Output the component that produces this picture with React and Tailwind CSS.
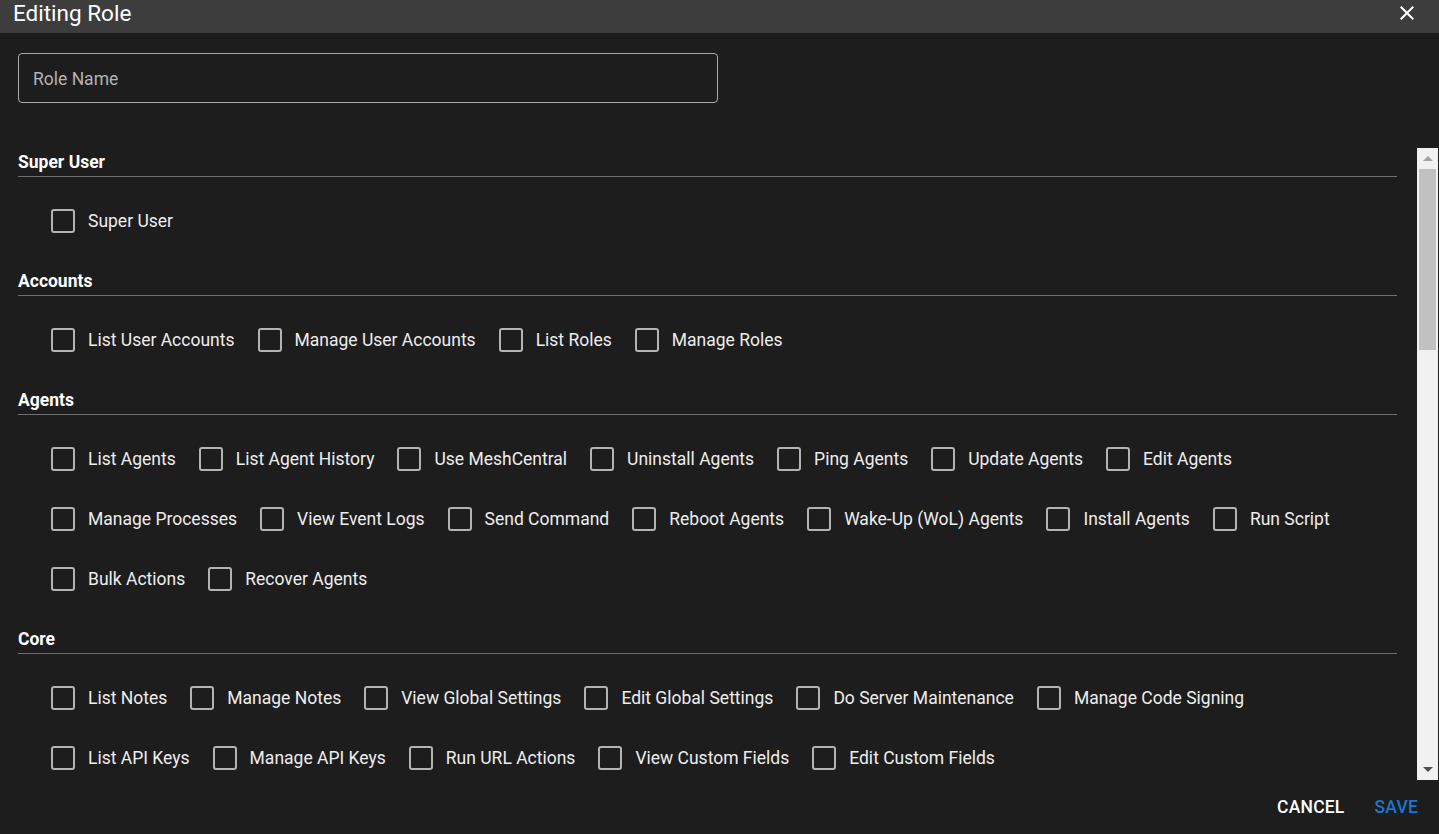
const sections = [
  { title: "Super User", rows: [["Super User"]] },
  {
    title: "Accounts",
    rows: [["List User Accounts", "Manage User Accounts", "List Roles", "Manage Roles"]],
  },
  {
    title: "Agents",
    rows: [
      ["List Agents", "List Agent History", "Use MeshCentral", "Uninstall Agents", "Ping Agents", "Update Agents", "Edit Agents"],
      ["Manage Processes", "View Event Logs", "Send Command", "Reboot Agents", "Wake-Up (WoL) Agents", "Install Agents", "Run Script"],
      ["Bulk Actions", "Recover Agents"],
    ],
  },
  {
    title: "Core",
    rows: [
      ["List Notes", "Manage Notes", "View Global Settings", "Edit Global Settings", "Do Server Maintenance", "Manage Code Signing"],
      ["List API Keys", "Manage API Keys", "Run URL Actions", "View Custom Fields", "Edit Custom Fields"],
    ],
  },
];

const Checkbox = ({ label }) => (
  <label className="flex items-center h-[60px] mr-[23px] cursor-pointer">
    <span className="w-6 h-6 rounded-[3px] border-2 border-[#b3b3b3] shrink-0" />
    <span className="ml-[13px] text-[17.5px] leading-6 text-[#ededed]">{label}</span>
  </label>
);

const Section = ({ title, rows }) => (
  <div className="mb-[17px]">
    <div className="pt-[1px] pb-[2px] border-b border-[#6f6f6f] mb-[14px]">
      <h3 className="text-[17.5px] leading-6 font-bold text-white">{title}</h3>
    </div>
    <div className="pl-[33px]">
      {rows.map((row, i) => (
        <div key={i} className="flex">
          {row.map((item) => (
            <Checkbox key={item} label={item} />
          ))}
        </div>
      ))}
    </div>
  </div>
);

export default function App() {
  return (
    <div className="w-[1439px] h-[834px] bg-[#1d1d1d] flex flex-col overflow-hidden font-['Roboto',sans-serif]">
      {/* Title bar */}
      <div className="h-[33px] bg-[#3d3d3d] flex items-start justify-between pl-[13px] pr-[20px] shrink-0">
        <h2 className="text-[22.5px] leading-[24px] text-white pt-[1px]">Editing Role</h2>
        <button className="text-white mt-[1px]">
          <svg width="24" height="24" viewBox="0 0 24 24" fill="currentColor">
            <path d="M19 6.41L17.59 5 12 10.59 6.41 5 5 6.41 10.59 12 5 17.59 6.41 19 12 13.41 17.59 19 19 17.59 13.41 12z" />
          </svg>
        </button>
      </div>

      {/* Role name */}
      <div className="pt-5 pl-[18px] pb-[45px] shrink-0">
        <div className="w-[700px] h-[50px] border border-[#a8a8a8] rounded-[4px] flex items-center px-[14px] pt-[2px]">
          <input
            placeholder="Role Name"
            className="w-full bg-transparent outline-none text-[17.5px] text-white placeholder:text-[#b3b3b3]"
          />
        </div>
      </div>

      {/* Permissions */}
      <div className="flex h-[632px] shrink-0 pr-[1px]">
        <div className="flex-1 overflow-hidden pl-[18px] pr-5 pt-[1px]">
          {sections.map((s) => (
            <Section key={s.title} {...s} />
          ))}
        </div>
        <div className="w-[21px] bg-[#f1f1f1] flex flex-col items-center">
          <div className="h-[21px] flex items-center justify-center">
            <div className="w-0 h-0 border-l-[5px] border-r-[5px] border-b-[5px] border-l-transparent border-r-transparent border-b-[#a3a3a3]" />
          </div>
          <div className="w-[17px] h-[181px] bg-[#c1c1c1]" />
          <div className="flex-1" />
          <div className="h-[21px] flex items-center justify-center">
            <div className="w-0 h-0 border-l-[5px] border-r-[5px] border-t-[5px] border-l-transparent border-r-transparent border-t-[#505050]" />
          </div>
        </div>
      </div>

      {/* Actions */}
      <div className="flex-1 flex items-center justify-end gap-[30px] pr-[21px]">
        <button className="text-[17.5px] font-medium uppercase tracking-[0.2px] text-white">Cancel</button>
        <button className="text-[17.5px] font-medium uppercase tracking-[0.2px] text-[#1976d2]">Save</button>
      </div>
    </div>
  );
}
